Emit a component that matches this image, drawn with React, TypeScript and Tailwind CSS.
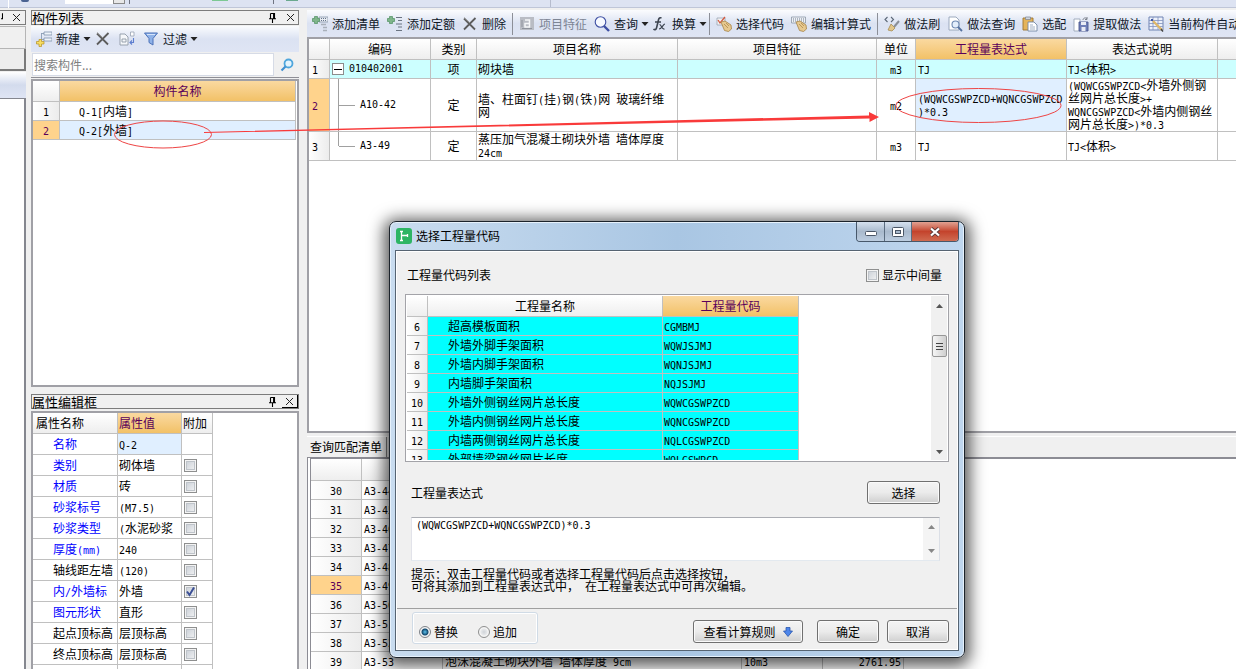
import type { ReactNode } from "react";

const codeRows = [
  { no: 6, name: "超高模板面积", code: "CGMBMJ" },
  { no: 7, name: "外墙外脚手架面积", code: "WQWJSJMJ" },
  { no: 8, name: "外墙内脚手架面积", code: "WQNJSJMJ" },
  { no: 9, name: "内墙脚手架面积", code: "NQJSJMJ" },
  { no: 10, name: "外墙外侧钢丝网片总长度", code: "WQWCGSWPZCD" },
  { no: 11, name: "外墙内侧钢丝网片总长度", code: "WQNCGSWPZCD" },
  { no: 12, name: "内墙两侧钢丝网片总长度", code: "NQLCGSWPZCD" },
  { no: 13, name: "外部墙梁钢丝网片长度", code: "WQLGSWPCD" },
];

const properties = [
  { name: "名称", value: "Q-2", blue: true, active: true },
  { name: "类别", value: "砌体墙", blue: true, box: true },
  { name: "材质", value: "砖", blue: true, box: true },
  { name: "砂浆标号", value: "(M7.5)", blue: true, box: true },
  { name: "砂浆类型", value: "(水泥砂浆", blue: true, box: true },
  { name: "厚度(mm)", value: "240", blue: true, box: true },
  { name: "轴线距左墙", value: "(120)", box: true },
  { name: "内/外墙标", value: "外墙", blue: true, box: true, checked: true },
  { name: "图元形状", value: "直形", blue: true, box: true },
  { name: "起点顶标高", value: "层顶标高", box: true },
  { name: "终点顶标高", value: "层顶标高", box: true },
  { name: "起点底标高", value: "层底标高", box: true },
];

const quotaRows = [
  { no: 30, code: "A3-44" },
  { no: 31, code: "A3-45" },
  { no: 32, code: "A3-46" },
  { no: 33, code: "A3-47" },
  { no: 34, code: "A3-48" },
  { no: 35, code: "A3-49", active: true },
  { no: 36, code: "A3-50" },
  { no: 37, code: "A3-51" },
  { no: 38, code: "A3-52" },
  { no: 39, code: "A3-53", name: "泡沫混凝土砌块外墙 墙体厚度 9cm", unit: "10m3", price: "2761.95" },
];

const th = "border-r border-b border-[#c0c0c0] bg-linear-to-b from-white to-[#eeeeee] p-0 font-normal";
const thActive = "border-r border-b border-[#c0c0c0] bg-linear-to-b from-[#fad9a0] to-[#f2c166] p-0 font-normal text-[#5a005a]";
const td = "border-r border-b border-[#c0c0c0] py-0";
const tdNo = "border-r border-b border-[#c0c0c0] bg-linear-to-r from-white to-[#ececec] p-0";
const tdNoActive = "border-r border-b border-[#c0c0c0] bg-[#ffd38c] p-0 text-[#5a005a]";
const bar = "bg-linear-to-b from-[#fbfcfe] via-[#dbe2f2] to-[#dfe5f4]";
const button =
  "h-[23px] rounded-[3px] border border-[#707070] bg-linear-to-b from-[#f4f4f4] via-[#ebebeb] to-[#cfcfcf] text-xs shadow-[inset_0_0_0_1px_#fafafa]";

/* half-width characters take 6px, full-width ones 12px */
function Txt({ children }: { children: string }) {
  return (
    <>
      {children.split(/([\x20-\x7e]+)/).map((part, i) =>
        i % 2 ? (
          <span key={i} className="font-['DejaVu_Sans_Mono',monospace] text-[10px] leading-none">
            {part}
          </span>
        ) : (
          part
        ),
      )}
    </>
  );
}

function CheckBox({ label, checked = false, id }: { label: string; checked?: boolean; id?: string }) {
  return (
    <span className="relative block size-[13px]">
      <input
        id={id}
        type="checkbox"
        aria-label={label}
        defaultChecked={checked}
        className="block size-[13px] appearance-none border border-[#8e8f8f] bg-linear-to-br from-[#c6ccd4] to-[#f6f6f6] shadow-[inset_0_0_0_1px_#f4f4f4,inset_0_0_0_2px_#bfc4ca]"
      />
      {checked && (
        <svg viewBox="0 0 13 13" className="pointer-events-none absolute inset-0 size-[13px]">
          <path d="M3 6.5 5.5 10 10 2.5" fill="none" stroke="#3b4f96" strokeWidth="2" />
        </svg>
      )}
    </span>
  );
}

function Pin() {
  return (
    <svg viewBox="0 0 9 10" className="h-[10px] w-[9px]">
      <path d="M2.5 .5h4v5M2.5 .5v5M5.6 1v5M1 5.8h7M4.5 6v4" fill="none" stroke="#000" strokeWidth="1.1" />
    </svg>
  );
}

function Cross() {
  return (
    <svg viewBox="0 0 9 9" className="size-[9px]">
      <path d="M1 1 8 8M8 1 1 8" stroke="#222" strokeWidth="1" />
    </svg>
  );
}

function Caret() {
  return (
    <svg viewBox="0 0 8 4" className="-mr-1 -ml-px h-1 w-2">
      <path d="M.5 0h7L4 4Z" fill="#222" />
    </svg>
  );
}

function PanelTitle({ children, raised = false }: { children: string; raised?: boolean }) {
  return (
    <div className="flex h-[15px] shrink-0 items-center border border-[#7c7c7c] bg-[#f0f0f0] text-[13px] leading-[13px]">
      <h2 className="grow">{children}</h2>
      <button type="button" aria-label="固定" className="mr-[5px]">
        <Pin />
      </button>
      <button
        type="button"
        aria-label="关闭"
        className={raised ? "flex h-[13px] w-4 items-center justify-center border-r border-b border-black" : "flex w-4 justify-center"}
      >
        <Cross />
      </button>
    </div>
  );
}

/* ---- toolbar icons ---- */

function Ico({ children }: { children: ReactNode }) {
  return (
    <svg viewBox="0 0 16 16" className="size-4 shrink-0">
      {children}
    </svg>
  );
}

const plus = <path d="M2.5 .5h3v2h2v3h-2v2h-3v-2h-2v-3h2Z" fill="#7fb58b" stroke="#4f8f60" strokeWidth=".7" />;

const AddList = () => (
  <Ico>
    <path d="M7 1h9v5H7Z" fill="#e8ecf2" stroke="#8694a8" strokeWidth=".8" />
    <path d="M9 2.5h6M9 4.5h6" stroke="#65758d" strokeWidth="1" strokeDasharray="1 1" />
    <path d="M9 8.5h5M11 11.5h4M11 14.5h4" stroke="#a9b0ba" strokeWidth="1.4" />
    {plus}
  </Ico>
);
const AddQuota = () => (
  <Ico>
    <path d="M9 1.5h6M11 4.5h4M9 8h6M11 11h4M9 14.5h6" stroke="#6b7482" strokeWidth="1.2" />
    {plus}
  </Ico>
);
const Delete = () => (
  <Ico>
    <path d="M2 2.5 13 13.5M13.5 2 2 13.5" stroke="#5c5c5c" strokeWidth="1.8" />
    <path d="M2 1.5 8 7" stroke="#9a9a9a" strokeWidth="1" />
  </Ico>
);
const Feature = () => (
  <Ico>
    <path d="M1 1h14v13H1Z" fill="#b9bcc4" />
    <path d="M6 4h4.5v7H6V7.500h4.500" fill="none" stroke="#f5f6f8" strokeWidth="1.5" />
    <path d="M3 12.500h10M3 4v7" stroke="#8f939c" strokeWidth="1" />
  </Ico>
);
const Search = () => (
  <Ico>
    <circle cx="6.5" cy="6" r="5.3" fill="#f6f9ff" stroke="#3e4fa3" strokeWidth="1.1" />
    <path d="M10 10 15 15" stroke="#3e4fa3" strokeWidth="2.4" />
  </Ico>
);
const Fx = () => (
  <Ico>
    <path d="M9.5 2C7 1 6.500 3 6 6L4.500 12C4 14 2.500 14 1.500 13M3 6h6" fill="none" stroke="#3c4450" strokeWidth="1.6" />
    <path d="M7.5 8.5c2 0 2 5 5 4.500M13 8c-2 0-3 5-6 5" fill="none" stroke="#3c4450" strokeWidth="1.2" />
  </Ico>
);
const hand = <path d="m5 6 4-1 6 4 .5 4-3 2.500-4-1Z" fill="#e6c88f" stroke="#a78445" strokeWidth=".8" />;
const PickCode = () => (
  <Ico>
    <path d="M1 2h8v7H1Z" fill="#f2f4f7" stroke="#9aa3b0" strokeWidth=".8" />
    <path d="m2 4 2 3 5-6" fill="none" stroke="#d4593f" strokeWidth="1.3" />
    {hand}
    <path d="m8 8 4 4M10 7l3 3" stroke="#a78445" strokeWidth=".7" />
  </Ico>
);
const EditFormula = () => (
  <Ico>
    <path d="M.5 1h14v6H.5Z" fill="#eef1f5" stroke="#8c97a6" strokeWidth=".8" />
    <path d="M2 3h11M2 5h11" stroke="#6c7a8e" strokeWidth="1" strokeDasharray="1 1" />
    {hand}
    <path d="m8 8 4 4M10 7l3 3" stroke="#a78445" strokeWidth=".7" />
  </Ico>
);
const Brush = () => (
  <Ico>
    <path d="M3.5 1 1 3.500 3.500 6M7 1l2.500 2.500L7 6" fill="none" stroke="#5c6878" strokeWidth="1.1" />
    <path d="m15 5-5 6" stroke="#8a8f98" strokeWidth="2" />
    <path d="m7 8 4 4-3 3-4-1Z" fill="#e2c68b" stroke="#a78d52" strokeWidth=".8" />
  </Ico>
);
const MethodQuery = () => (
  <Ico>
    <path d="M2 1h7l3 3v10H2Z" fill="#fff" stroke="#93a2b7" strokeWidth=".9" />
    <circle cx="8.5" cy="8.5" r="3.5" fill="#e3eefb" stroke="#6e89b2" strokeWidth="1.1" />
    <path d="m11 11 4 4" stroke="#54719f" strokeWidth="1.8" />
  </Ico>
);
const Paste = () => (
  <Ico>
    <path d="M1 2h10v12H1Z" fill="#e5b45a" stroke="#9c7530" strokeWidth=".9" />
    <path d="M3.5 1h5v2.500h-5Z" fill="#cfd5dd" stroke="#7a8493" strokeWidth=".7" />
    <path d="M6 6h6l3 3v6H6Z" fill="#fff" stroke="#7488a5" strokeWidth=".9" />
    <path d="M8 9h3M8 11h5M8 13h5" stroke="#8c9cb5" strokeWidth=".8" />
  </Ico>
);
const Extract = () => (
  <Ico>
    <path d="M1 3h6v12H1Z" fill="#fff" stroke="#9aa6b8" strokeWidth=".9" />
    <path d="M6 6h9v9H6Z" fill="#6f7fb8" stroke="#4a5890" strokeWidth=".9" />
    <path d="M8 6h5v3H8ZM8.500 11h4v4h-4Z" fill="#e9ecf6" />
    <path d="M10 4c0-2 3-3 4-1m0-2v2.500h-2" fill="none" stroke="#7d828c" strokeWidth="1" />
  </Ico>
);
const AutoApply = () => (
  <Ico>
    <path d="M1 1h14v13H1Z" fill="#edf1fa" stroke="#6f83b3" strokeWidth="1" />
    <path d="M1 4.500h14M1 7.500h14M1 10.500h14M5 1v13M10 1v13" stroke="#8193be" strokeWidth=".8" />
    <path d="m3 3 2 2m0-2L3 5" stroke="#3d55a0" strokeWidth="1" />
    <path d="m5 5 9 9" stroke="#dfb869" strokeWidth="2.4" />
    <path d="m13 13 2 2.500" stroke="#444" strokeWidth="1.4" />
  </Ico>
);
const NewItem = () => (
  <Ico>
    <path d="M8 1h8v3H8ZM8 7h8v3H8Z" fill="#eef3f9" stroke="#7f93ac" strokeWidth=".8" />
    <path d="M5 2.500h3M5.500 2.500v6H8" fill="none" stroke="#7f93ac" strokeWidth=".8" />
    <path d="M3 8.500h2.500v2H8V13H5.500v2.500H3V13H.5v-2.500H3Z" fill="#f7dd62" stroke="#b59122" strokeWidth=".7" />
  </Ico>
);
const CopyItem = () => (
  <Ico>
    <path d="M1 3h5l3 3v8H1Z" fill="#f5f7fa" stroke="#8e98a6" strokeWidth=".9" />
    <path d="M3 8h4v3H3Z" fill="none" stroke="#8e98a6" strokeWidth=".9" />
    <path d="M11.500 1H15v4h-3.500Z" fill="#fff" stroke="#98a2b2" strokeWidth=".8" />
    <path d="M14.500 7v4.500H11m2-2-2 2 2 2" fill="none" stroke="#5e7fd0" strokeWidth="1.1" />
  </Ico>
);
const Filter = () => (
  <Ico>
    <path d="M1.500 2h13L10 7.500V14l-4-2.500v-4Z" fill="#8fb2e8" stroke="#4b71b8" strokeWidth="1" />
    <path d="M4 3.500h8" stroke="#d4e3fa" strokeWidth="1" />
  </Ico>
);

function Tool({ icon, label, menu, disabled }: { icon: ReactNode; label: string; menu?: boolean; disabled?: boolean }) {
  return (
    <button
      type="button"
      disabled={disabled}
      className="flex shrink-0 items-center gap-1 whitespace-nowrap text-xs text-[#101828] disabled:text-[#7d8594]"
    >
      {icon}
      {label}
      {menu && <Caret />}
    </button>
  );
}

const Sep = () => <span className="-mx-px h-[22px] w-px shrink-0 bg-[#8c8f98]" />;

/* ---- page parts ---- */

function TopStrip() {
  return (
    <div className="flex h-2 shrink-0 border-b border-[#bfc6d8] bg-[#dde3f2]">
      <span className="ml-2 h-2 w-px bg-white" />
      <span className="ml-3 h-[2px] w-2 rounded-b bg-[#4a6291]" />
      <span className="ml-9 h-1 w-12 bg-white" />
      <span className="h-1 w-3 border border-t-0 border-[#8a8a8a] bg-[#e8e8e8]" />
      <span className="ml-1 h-1 w-px bg-[#6f7482]" />
      <span className="ml-[82px] h-px w-4 bg-[#7cc894]" />
      <span className="ml-[45px] h-1 w-px bg-[#6f7482]" />
      <span className="ml-3 h-px w-3 bg-[#6aa98e]" />
      <span className="ml-[252px] h-[7px] w-px bg-[#b6bccd]" />
    </div>
  );
}

function DockEdge() {
  return (
    <div className="flex w-[26px] shrink-0 flex-col">
      <div className="flex h-[15px] items-center justify-end border border-l-0 border-[#7c7c7c]">
        <span className="h-[10px] w-1 overflow-hidden">
          <Pin />
        </span>
        <button type="button" aria-label="关闭" className="mr-1 ml-[9px]">
          <Cross />
        </button>
      </div>
      <div className="mt-px h-[23px] border-t border-r border-b border-[#b5b5b5]" />
      <div className="h-[22px] border-r-2 border-b-2 border-[#7a7a7a] bg-[#ededed]" />
      <div className="mt-px h-[26px] bg-linear-to-b from-white via-[#d3dbed] to-[#dfe5f4]" />
      <div className="grow border-t border-r-2 border-[#85878f] bg-white" />
    </div>
  );
}

function ComponentList() {
  return (
    <section className="flex min-h-0 grow flex-col">
      <PanelTitle>构件列表</PanelTitle>
      <div className={`mt-px flex h-[26px] shrink-0 items-center gap-2 pl-[5px] ${bar}`}>
        <Tool icon={<NewItem />} label="新建" menu />
        <button type="button" aria-label="删除">
          <Delete />
        </button>
        <button type="button" aria-label="复制">
          <CopyItem />
        </button>
        <Tool icon={<Filter />} label="过滤" menu />
      </div>
      <form className="flex h-[26px] shrink-0 items-center border-b border-[#8f8f96]">
        <input
          aria-label="搜索构件"
          placeholder="搜索构件..."
          className="mx-px h-[23px] min-w-0 grow border border-[#d6dbe6] bg-white px-px text-xs placeholder:text-[#7f7f7f]"
        />
        <button type="button" aria-label="搜索" className="flex w-6 justify-center">
          <svg viewBox="0 0 14 14" className="size-[14px]">
            <circle cx="8.5" cy="5.5" r="4" fill="#e4f4fd" stroke="#4fa6dc" strokeWidth="1.8" />
            <path d="M5.5 8.500 1.500 12.500" stroke="#3f8fd0" strokeWidth="2.2" />
          </svg>
        </button>
      </form>
      <div className="mt-px grow border-2 border-[#a0a0a6] bg-white pr-px">
        <table className="w-full table-fixed border-separate border-spacing-0 leading-3">
          <colgroup>
            <col className="w-[27px]" />
            <col />
          </colgroup>
          <thead>
            <tr className="h-[21px]">
              <th className={th} />
              <th className={thActive}>构件名称</th>
            </tr>
          </thead>
          <tbody>
            <tr className="h-[19px]">
              <td className={`${tdNo} text-center`}><Txt>1</Txt></td>
              <td className={`${td} pl-[19px]`}><Txt>Q-1[内墙]</Txt></td>
            </tr>
            <tr className="h-[19px]">
              <td className={`${tdNoActive} text-center`}><Txt>2</Txt></td>
              <td className={`${td} bg-[#e0efff] pl-[19px]`}><Txt>Q-2[外墙]</Txt></td>
            </tr>
          </tbody>
        </table>
      </div>
    </section>
  );
}

function PropertyEditor() {
  return (
    <section className="flex h-[275px] shrink-0 flex-col overflow-hidden">
      <PanelTitle raised>属性编辑框</PanelTitle>
      <div className="mt-[2px] min-h-0 grow overflow-hidden border-2 border-b-0 border-[#a0a0a6] bg-white">
        <table className="w-[180px] table-fixed border-separate border-spacing-0 leading-3 whitespace-nowrap">
          <colgroup>
            <col className="w-[85px]" />
            <col className="w-16" />
            <col className="w-[31px]" />
          </colgroup>
          <thead>
            <tr className="h-[21px] text-left">
              <th className={`${th} pl-[3px]`}>属性名称</th>
              <th className={`${thActive} pl-px`}>属性值</th>
              <th className={`${th} pl-px`}>附加</th>
            </tr>
          </thead>
          <tbody>
            {properties.map((p) => (
              <tr key={p.name} className="h-[21px]">
                <td className={`${td} overflow-hidden pr-0 pl-5 ${p.blue ? "text-[#0000ff]" : ""}`}>
                  <Txt>{p.name}</Txt>
                </td>
                <td className={`${td} overflow-hidden pr-0 pl-px ${p.active ? "bg-[#e0efff]" : ""}`}>
                  <Txt>{p.value}</Txt>
                </td>
                <td className={`${td} px-[2px]`}>{p.box && <CheckBox label={`附加 ${p.name}`} checked={p.checked} />}</td>
              </tr>
            ))}
          </tbody>
        </table>
      </div>
    </section>
  );
}

function Toolbar() {
  return (
    <div className={`flex h-[27px] shrink-0 items-center gap-[7px] overflow-hidden pl-[5px] ${bar}`}>
      <Tool icon={<AddList />} label="添加清单" />
      <Tool icon={<AddQuota />} label="添加定额" />
      <Tool icon={<Delete />} label="删除" />
      <Sep />
      <Tool icon={<Feature />} label="项目特征" disabled />
      <Tool icon={<Search />} label="查询" menu />
      <Tool icon={<Fx />} label="换算" menu />
      <Sep />
      <Tool icon={<PickCode />} label="选择代码" />
      <Tool icon={<EditFormula />} label="编辑计算式" />
      <Sep />
      <Tool icon={<Brush />} label="做法刷" />
      <Tool icon={<MethodQuery />} label="做法查询" />
      <Tool icon={<Paste />} label="选配" />
      <Tool icon={<Extract />} label="提取做法" />
      <Tool icon={<AutoApply />} label="当前构件自动套用做法" />
    </div>
  );
}

function MethodTable() {
  return (
    <div className="min-h-0 grow border-2 border-r-0 border-[#a0a0a6] bg-white">
      <table className="w-full table-fixed border-separate border-spacing-0 leading-3">
        <colgroup>
          <col className="w-[21px]" />
          <col className="w-[101px]" />
          <col className="w-[46px]" />
          <col className="w-[201px]" />
          <col className="w-[199px]" />
          <col className="w-[39px]" />
          <col className="w-[151px]" />
          <col className="w-[151px]" />
          <col />
        </colgroup>
        <thead>
          <tr className="h-[21px]">
            <th className={th} />
            <th className={th}>编码</th>
            <th className={th}>类别</th>
            <th className={th}>项目名称</th>
            <th className={th}>项目特征</th>
            <th className={th}>单位</th>
            <th className={thActive}>工程量表达式</th>
            <th className={th}>表达式说明</th>
            <th className={`${th} border-r-0`} />
          </tr>
        </thead>
        <tbody>
          <tr className="h-[19px] bg-[#ccffff]">
            <td className={`${tdNo} pl-[3px]`}><Txt>1</Txt></td>
            <td className={`${td} px-[2px]`}>
              <div className="flex items-center gap-[5px]">
                <button type="button" aria-label="折叠" className="flex size-3 items-center justify-center border border-[#8c8c8c] bg-white">
                  <span className="h-px w-2 bg-black" />
                </button>
                <Txt>010402001</Txt>
              </div>
            </td>
            <td className={`${td} text-center`}>项</td>
            <td className={`${td} px-px`}>砌块墙</td>
            <td className={td} />
            <td className={`${td} text-center`}><Txt>m3</Txt></td>
            <td className={`${td} px-[2px]`}><Txt>TJ</Txt></td>
            <td className={`${td} px-px`}><Txt>{"TJ<体积>"}</Txt></td>
            <td className={`${td} border-r-0`} />
          </tr>
          <tr className="h-[53px]">
            <td className={`${tdNoActive} pl-[3px]`}><Txt>2</Txt></td>
            <td className={`${td} px-0`}>
              <div className="flex items-center">
                <span className="ml-2 h-[52px] w-px bg-[#a0a0a0]" />
                <span className="mr-[5px] h-px w-4 bg-[#a0a0a0]" />
                <Txt>A10-42</Txt>
              </div>
            </td>
            <td className={`${td} text-center`}>定</td>
            <td className={`${td} px-px`}><Txt>墙、柱面钉(挂)钢(铁)网 玻璃纤维</Txt><br />网</td>
            <td className={td} />
            <td className={`${td} text-center`}><Txt>m2</Txt></td>
            <td className={`${td} bg-[#e0efff] px-[2px] whitespace-nowrap`}>
              <Txt>(WQWCGSWPZCD+WQNCGSWPZCD</Txt><br /><Txt>)*0.3</Txt>
            </td>
            <td className={`${td} px-px whitespace-nowrap`}>
              <Txt>{"(WQWCGSWPZCD<外墙外侧钢"}</Txt><br />
              <Txt>{"丝网片总长度>+"}</Txt><br />
              <Txt>{"WQNCGSWPZCD<外墙内侧钢丝"}</Txt><br />
              <Txt>{"网片总长度>)*0.3"}</Txt>
            </td>
            <td className={`${td} border-r-0`} />
          </tr>
          <tr className="h-[29px]">
            <td className={`${tdNo} pl-[3px]`}><Txt>3</Txt></td>
            <td className={`${td} px-0`}>
              <div className="flex items-center">
                <span className="ml-2 h-[14px] w-px self-start bg-[#a0a0a0]" />
                <span className="mr-[5px] h-px w-4 bg-[#a0a0a0]" />
                <span className="flex h-7 items-center"><Txt>A3-49</Txt></span>
              </div>
            </td>
            <td className={`${td} text-center`}>定</td>
            <td className={`${td} px-px`}><Txt>蒸压加气混凝土砌块外墙 墙体厚度</Txt><br /><Txt>24cm</Txt></td>
            <td className={td} />
            <td className={`${td} text-center`}><Txt>m3</Txt></td>
            <td className={`${td} px-[2px]`}><Txt>TJ</Txt></td>
            <td className={`${td} px-px`}><Txt>{"TJ<体积>"}</Txt></td>
            <td className={`${td} border-r-0`} />
          </tr>
        </tbody>
      </table>
    </div>
  );
}

function QuotaPanel() {
  return (
    <section className="flex h-[233px] shrink-0 flex-col overflow-hidden">
      <div className="flex h-[21px] shrink-0 border-t border-white">
        <button type="button" className="h-5 w-20 border-r border-[#808080] pl-[3px] text-left text-xs whitespace-nowrap">
          查询匹配清单
        </button>
      </div>
      <div className="min-h-0 grow border-t-2 border-l-4 border-double border-[#8c8c94] bg-white">
        <table className="w-[593px] table-fixed border-separate border-spacing-0 leading-3 whitespace-nowrap">
          <colgroup>
            <col className="w-[51px]" />
            <col className="w-[81px]" />
            <col className="w-[299px]" />
            <col className="w-[81px]" />
            <col className="w-[81px]" />
          </colgroup>
          <thead>
            <tr className="h-[22px]">
              <th className={th} />
              <th className={th} />
              <th className={th} />
              <th className={th} />
              <th className={th} />
            </tr>
          </thead>
          <tbody>
            {quotaRows.map((r) => (
              <tr key={r.no} className="h-[19px]">
                <td className={`${r.active ? tdNoActive : tdNo} text-center`}><Txt>{String(r.no)}</Txt></td>
                <td className={`${td} px-[2px]`}><Txt>{r.code}</Txt></td>
                <td className={`${td} px-[2px]`}><Txt>{r.name ?? ""}</Txt></td>
                <td className={`${td} px-[2px]`}><Txt>{r.unit ?? ""}</Txt></td>
                <td className={`${td} px-[2px] text-right`}><Txt>{r.price ?? ""}</Txt></td>
              </tr>
            ))}
          </tbody>
        </table>
      </div>
    </section>
  );
}

function ScrollArrow({ down = false }: { down?: boolean }) {
  return (
    <svg viewBox="0 0 7 4" className="h-1 w-[7px]">
      <path d={down ? "M0 0h7L3.5 4Z" : "M0 4h7L3.5 0Z"} fill="#555" />
    </svg>
  );
}

function CodeDialog() {
  return (
    <div
      role="dialog"
      aria-label="选择工程量代码"
      className="absolute top-[221px] left-[389px] flex w-[576px] flex-col rounded-[7px] border border-[#1c232b] bg-linear-to-r from-[#c9dcef] via-[#a9c6e3] to-[#bfd6ee] px-[5px] pb-[6px] shadow-[inset_0_0_0_1px_#e6f1fb,0_3px_16px_5px_rgba(0,0,0,0.65)]"
    >
      <div className="flex h-7 items-start">
        <svg viewBox="0 0 16 16" className="mt-[6px] ml-px size-4">
          <rect width="16" height="16" rx="3" fill="#2db564" />
          <path d="M5.5 4v8M5.5 7.500h6" fill="none" stroke="#fff" strokeWidth="1.3" />
          <path d="M4 3.500h3M4 12.500h3M11.500 6v3" stroke="#fff" strokeWidth="1.3" />
        </svg>
        <h2 className="mt-[5px] ml-1 grow text-xs leading-[18px]">选择工程量代码</h2>
        <div className="flex h-5 w-[103px] overflow-hidden rounded-b-[4px] border border-t-0 border-[#47586b]">
          <button type="button" aria-label="最小化" className="flex w-7 items-center justify-center border-r border-[#5b6d80] bg-linear-to-b from-[#d5e1ee] via-[#a9bacd] to-[#bccde0]">
            <svg viewBox="0 0 12 5" className="mt-1 h-[5px] w-3"><rect x=".5" y=".5" width="11" height="4" rx="1" fill="#fff" stroke="#4a5666" /></svg>
          </button>
          <button type="button" aria-label="最大化" className="flex w-[27px] items-center justify-center border-r border-[#5b6d80] bg-linear-to-b from-[#d5e1ee] via-[#a9bacd] to-[#bccde0]">
            <svg viewBox="0 0 12 10" className="h-[10px] w-3">
              <rect x=".5" y=".5" width="11" height="9" rx="1" fill="#fff" stroke="#4a5666" />
              <rect x="3.5" y="3.5" width="5" height="3" fill="#a9bacd" stroke="#4a5666" />
            </svg>
          </button>
          <button type="button" aria-label="关闭" className="flex grow items-center justify-center bg-linear-to-b from-[#e0a192] via-[#c4432c] to-[#cf6a50]">
            <svg viewBox="0 0 12 10" className="h-[10px] w-3">
              <path d="M2 1.5 10 8.5M10 1.5 2 8.5" stroke="#5b3a3a" strokeWidth="3.8" />
              <path d="M2 1.5 10 8.5M10 1.5 2 8.5" stroke="#fff" strokeWidth="2.2" />
            </svg>
          </button>
        </div>
      </div>

      <div className="border border-[#566472] bg-[#f0f0f0] pt-px pr-px pl-px shadow-[inset_0_0_0_1px_#fff]">
        <div className="flex h-[42px] items-center justify-between pt-1 pr-[15px] pl-[10px]">
          <h3>工程量代码列表</h3>
          <span className="flex items-center gap-[3px]">
            <CheckBox id="middle" label="显示中间量" />
            <label htmlFor="middle">显示中间量</label>
          </span>
        </div>

        <div className="mx-2 flex h-[168px] border border-[#a3a3a8] bg-white p-px">
          <div className="grow overflow-hidden">
            <table className="w-[392px] table-fixed border-separate border-spacing-0 leading-3">
              <colgroup>
                <col className="w-[21px]" />
                <col className="w-[235px]" />
                <col className="w-[136px]" />
              </colgroup>
              <thead>
                <tr className="h-[21px]">
                  <th className={th} />
                  <th className={th}>工程量名称</th>
                  <th className={thActive}>工程量代码</th>
                </tr>
              </thead>
              <tbody>
                {codeRows.map((r) => (
                  <tr key={r.no} className="h-[19px] bg-[#00ffff]">
                    <td className={`${tdNo} text-center`}><Txt>{String(r.no)}</Txt></td>
                    <td className={`${td} pl-5`}>{r.name}</td>
                    <td className={`${td} px-px`}><Txt>{r.code}</Txt></td>
                  </tr>
                ))}
              </tbody>
            </table>
          </div>
          <div className="flex w-4 flex-col items-center bg-[#f0f0f0] pt-2 pb-[6px]">
            <ScrollArrow />
            <div className="mt-[27px] flex h-[22px] w-[15px] flex-col items-center justify-center gap-[2px] rounded-xs border border-[#979797] bg-linear-to-r from-[#f5f5f5] to-[#cfcfcf]">
              <span className="h-px w-[7px] bg-[#444]" />
              <span className="h-px w-[7px] bg-[#444]" />
              <span className="h-px w-[7px] bg-[#444]" />
            </div>
            <span className="grow" />
            <ScrollArrow down />
          </div>
        </div>

        <div className="flex h-[55px] items-center justify-between pt-[6px] pr-[17px] pl-[14px]">
          <label htmlFor="expression">工程量表达式</label>
          <button type="button" className={`${button} w-[73px]`}>选择</button>
        </div>

        <div className="mr-[17px] ml-[14px] flex h-11 border border-t-[#abadb3] border-r-[#dbdfe6] border-b-[#e3e9ef] border-l-[#e2e3ea] bg-white">
          <textarea
            id="expression"
            defaultValue="(WQWCGSWPZCD+WQNCGSWPZCD)*0.3"
            className="grow resize-none overflow-hidden px-1 py-[2px] font-['DejaVu_Sans_Mono',monospace] text-[10px] leading-3"
          />
          <div className="flex w-4 flex-col items-center justify-between bg-[#f0f0f0] py-[7px] opacity-70">
            <ScrollArrow />
            <ScrollArrow down />
          </div>
        </div>

        <p className="mt-[7px] pl-[14px] leading-3">
          提示：双击工程量代码或者选择工程量代码后点击选择按钮，
          <br />
          <Txt>可将其添加到工程量表达式中， 在工程量表达式中可再次编辑。</Txt>
        </p>

        <div className="mt-[15px] flex h-[42px] items-start border-t border-[#a0a0a0] pr-2 pl-[15px]">
          <fieldset className="mt-[3px] flex h-8 w-[126px] items-center rounded-[3px] border border-[#d0dbe6] pt-2 pl-[6px] shadow-[inset_0_0_0_1px_#fff]">
            <input
              id="replace"
              type="radio"
              name="mode"
              defaultChecked
              className="size-3 appearance-none rounded-full border border-[#7f8388] bg-[#e8e8e8] checked:bg-[radial-gradient(circle,#5cc3ee_0,#12486e_3px,#f4f4f4_4px)]"
            />
            <label htmlFor="replace" className="ml-[3px]">替换</label>
            <input
              id="append"
              type="radio"
              name="mode"
              className="ml-5 size-3 appearance-none rounded-full border border-[#8e8f8f] bg-[radial-gradient(circle,#cfd3d8_0,#e6e8ea_3px,#f4f4f4_4px)] checked:bg-[#12486e]"
            />
            <label htmlFor="append" className="ml-[3px]">追加</label>
          </fieldset>
          <span className="grow" />
          <button type="button" className={`${button} mt-[11px] flex w-[110px] items-center justify-center gap-[7px]`}>
            查看计算规则
            <svg viewBox="0 0 10 10" className="size-[10px]">
              <path d="M3 .5h4V4h2.500L5 9.500.5 4H3Z" fill="#4c85ea" stroke="#2b57ad" strokeWidth=".8" />
            </svg>
          </button>
          <button type="button" className={`${button} mt-[11px] ml-[14px] w-[62px]`}>确定</button>
          <button type="button" className={`${button} mt-[11px] ml-2 w-[62px]`}>取消</button>
        </div>
      </div>
    </div>
  );
}

/* red marks that link the wall to its expression */
function Marks() {
  return (
    <svg viewBox="0 0 1236 180" className="pointer-events-none absolute top-0 left-0 h-[180px] w-[1236px]">
      <ellipse cx="163" cy="134.5" rx="48.5" ry="13.5" fill="none" stroke="#ee4444" strokeWidth="1" />
      <ellipse cx="978.5" cy="105.5" rx="82.5" ry="17" fill="none" stroke="#ee4444" strokeWidth="1" />
      <path d="M204 132 869 115.500V112L879 117 869.500 122V118.500L204 133Z" fill="#f93a3a" />
    </svg>
  );
}

export default function App() {
  return (
    <main className="relative flex h-screen flex-col overflow-hidden bg-[#f0f0f0] font-['Noto_Sans_CJK_SC',sans-serif] text-xs text-black">
      <TopStrip />
      <div className="flex min-h-0 grow pt-[2px]">
        <DockEdge />
        <div className="ml-[5px] flex w-[268px] shrink-0 flex-col gap-[7px]">
          <ComponentList />
          <PropertyEditor />
        </div>
        <div className="ml-2 flex min-w-0 grow flex-col gap-[3px]">
          <div className="flex min-h-0 grow flex-col">
            <Toolbar />
            <MethodTable />
          </div>
          <QuotaPanel />
        </div>
      </div>
      <Marks />
      <CodeDialog />
    </main>
  );
}
